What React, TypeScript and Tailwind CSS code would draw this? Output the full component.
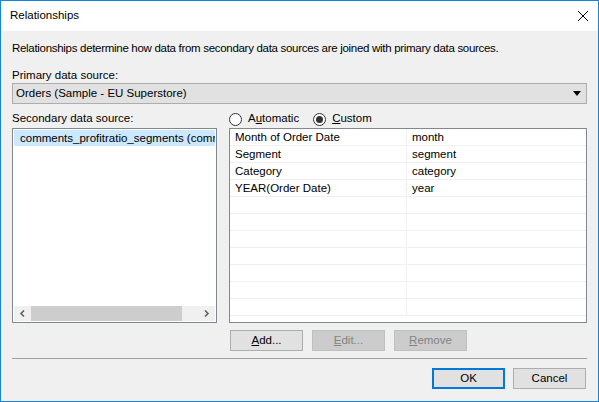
import React from 'react';

const font = { fontFamily: '"Liberation Sans", Arial, sans-serif' };

const rows: [string, string][] = [
  ['Month of Order Date', 'month'],
  ['Segment', 'segment'],
  ['Category', 'category'],
  ['YEAR(Order Date)', 'year'],
  ['', ''],
  ['', ''],
  ['', ''],
  ['', ''],
  ['', ''],
  ['', ''],
  ['', ''],
];

function Radio({ checked }: { checked?: boolean }) {
  return (
    <span className="flex h-[13px] w-[13px] items-center justify-center rounded-full border border-[#333] bg-white">
      {checked && <span className="h-[7px] w-[7px] rounded-full bg-[#333]" />}
    </span>
  );
}

function Btn({ children, disabled, primary }: { children: React.ReactNode; disabled?: boolean; primary?: boolean }) {
  return (
    <div
      className={
        'flex h-[21px] w-[73px] items-center justify-center text-[11.5px] ' +
        (primary
          ? 'border-2 border-[#0078d7] bg-[#e1e1e1] text-black'
          : disabled
          ? 'border border-[#bfbfbf] bg-[#cccccc] text-[#838383]'
          : 'border border-[#adadad] bg-[#e1e1e1] text-black')
      }
    >
      {children}
    </div>
  );
}

export default function App() {
  return (
    <div className="flex h-[402px] w-[599px] flex-col border border-[#1883d7] bg-[#f0f0f0] text-[11.5px] text-black" style={font}>
      <div className="flex h-[30px] items-center justify-between bg-white pl-[9px] pr-[8px]">
        <span className="text-[11.5px]">Relationships</span>
        <svg width="12" height="12" viewBox="0 0 12 12" className="mr-[1px]">
          <path d="M1 1 L11 11 M11 1 L1 11" stroke="#000" strokeWidth="1" />
        </svg>
      </div>
      <div className="flex flex-1 flex-col px-[11px]">
        <div className="mt-[9px] h-[16px] leading-[16px] tracking-[-0.3px]">
          Relationships determine how data from secondary data sources are joined with primary data sources.
        </div>
        <div className="mt-[11px] h-[16px] leading-[16px]">Primary data source:</div>
        <div className="flex h-[21px] items-center justify-between border border-[#adadad] bg-[#e1e1e1] pl-[3px] pr-[5px]">
          <span>Orders (Sample - EU Superstore)</span>
          <svg width="8" height="5" viewBox="0 0 8 5">
            <path d="M0 0 H8 L4 5 Z" fill="#000" />
          </svg>
        </div>
        <div className="mt-[6px] flex">
          <div className="flex w-[205px] flex-col">
            <div className="h-[18px] leading-[17px]">Secondary data source:</div>
            <div className="flex h-[195px] flex-col border border-[#828790] bg-white p-[1px]">
              <div className="h-[16px] overflow-hidden whitespace-nowrap bg-[#cce8ff] pl-[6px] leading-[16px]">
                comments_profitratio_segments (comments_profitratio_segments)
              </div>
              <div className="flex-1" />
              <div className="flex h-[15px] items-center bg-[#f0f0f0]">
                <div className="flex w-[17px] items-center justify-center">
                  <svg width="7" height="7" viewBox="0 0 7 7">
                    <path d="M5 0.5 L2 3.5 L5 6.5" fill="none" stroke="#606060" strokeWidth="1.6" />
                  </svg>
                </div>
                <div className="h-[15px] w-[151px] bg-[#cdcdcd]" />
                <div className="flex-1" />
                <div className="flex w-[17px] items-center justify-center">
                  <svg width="7" height="7" viewBox="0 0 7 7">
                    <path d="M2 0.5 L5 3.5 L2 6.5" fill="none" stroke="#606060" strokeWidth="1.6" />
                  </svg>
                </div>
              </div>
            </div>
          </div>
          <div className="ml-[12px] flex w-[358px] flex-col">
            <div className="flex h-[18px] items-center">
              <Radio />
              <span className="ml-[6px]">
                A<span className="underline">u</span>tomatic
              </span>
              <span className="ml-[14px] flex items-center">
                <Radio checked />
                <span className="ml-[6px]">
                  <span className="underline">C</span>ustom
                </span>
              </span>
            </div>
            <div className="h-[195px] overflow-hidden border border-[#828790] bg-white">
              {rows.map((r, i) => (
                <div key={i} className="flex h-[17px] border-b border-[#f0f0f0]">
                  <div className="w-[177px] border-r border-[#f0f0f0] pl-[5px] leading-[17px]">{r[0]}</div>
                  <div className="flex-1 pl-[5px] leading-[17px]">{r[1]}</div>
                </div>
              ))}
            </div>
            <div className="mt-[7px] flex gap-[9px] pl-[1px]">
              <Btn>
                <span className="underline">A</span>dd...
              </Btn>
              <Btn disabled>
                <span className="underline">E</span>dit...
              </Btn>
              <Btn disabled>
                <span className="underline">R</span>emove
              </Btn>
            </div>
          </div>
        </div>
        <div className="mt-[7px] h-[1px] bg-[#a0a0a0]" />
        <div className="mt-[9px] flex justify-end gap-[8px] pr-[1px]">
          <Btn primary>OK</Btn>
          <Btn>Cancel</Btn>
        </div>
      </div>
    </div>
  );
}
